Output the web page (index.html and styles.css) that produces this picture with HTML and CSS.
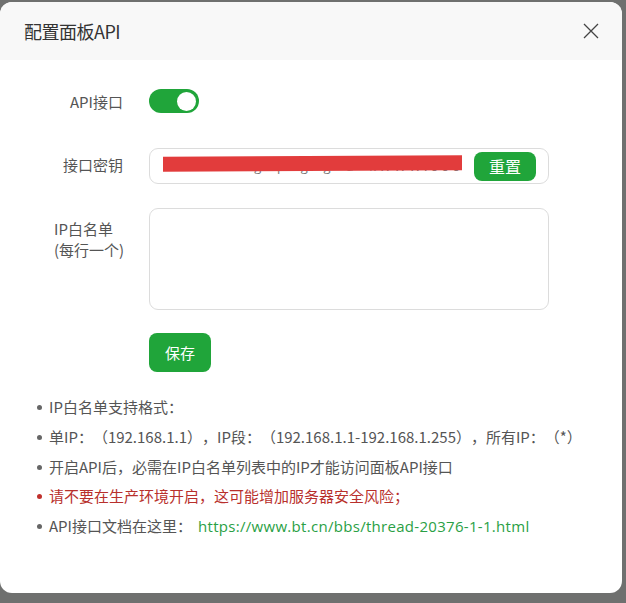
FILE: index.html
```html
<!DOCTYPE html>
<html lang="zh-CN">
<head>
<meta charset="utf-8">
<title>配置面板API</title>
<link rel="stylesheet" href="styles.css">
</head>
<body>
<div class="dialog">
  <div class="dialog-header">
    <span class="dialog-title">配置面板API</span>
    <span class="close-btn" aria-label="关闭">
      <svg width="16" height="16" viewBox="0 0 16 16"><path d="M1 1L15 15M15 1L1 15" stroke="#444" stroke-width="1.3" fill="none"/></svg>
    </span>
  </div>
  <div class="dialog-body">
    <div class="form-row row-toggle">
      <div class="form-label">API接口</div>
      <div class="form-control">
        <span class="switch"><span class="knob"></span></span>
      </div>
    </div>
    <div class="form-row row-key">
      <div class="form-label label-key">接口密钥</div>
      <div class="form-control">
        <div class="key-input">
          <span class="key-text">g  p  g  g  a  kWWW.ooo</span>
          <span class="redact"></span>
          <button class="btn btn-small">重置</button>
        </div>
      </div>
    </div>
    <div class="form-row row-ips">
      <div class="form-label label-multi">
        <div class="label-lines">IP白名单<br>(每行一个)</div>
      </div>
      <div class="form-control">
        <textarea class="ip-area"></textarea>
      </div>
    </div>
    <div class="form-row row-save">
      <div class="form-label"></div>
      <div class="form-control">
        <button class="btn btn-save">保存</button>
      </div>
    </div>
    <ul class="tips">
      <li>IP白名单支持格式：</li>
      <li>单IP：（192.168.1.1），IP段：（192.168.1.1-192.168.1.255），所有IP：（*）</li>
      <li>开启API后，必需在IP白名单列表中的IP才能访问面板API接口</li>
      <li class="danger">请不要在生产环境开启，这可能增加服务器安全风险；</li>
      <li>API接口文档在这里：<a class="link" href="#">https://www.bt.cn/bbs/thread-20376-1-1.html</a></li>
    </ul>
  </div>
</div>
</body>
</html>
```

FILE: styles.css
```css
html, body {
  margin: 0;
  padding: 0;
}
body {
  background: #6f706f;
  width: 626px;
  height: 603px;
  overflow: hidden;
  font-family: "Open Sans", "Noto Sans CJK SC", sans-serif;
  color: #555;
}
.dialog {
  margin-top: 2px;
  width: 622px;
  height: 591px;
  background: #fff;
  border-radius: 12px;
  overflow: hidden;
}
.dialog-header {
  height: 58px;
  background: #f8f8f8;
  display: flex;
  align-items: center;
  justify-content: space-between;
  padding: 0 23px 0 24px;
}
.dialog-title {
  font-family: "Noto Sans CJK SC", sans-serif;
  font-size: 18px;
  color: #333;
  letter-spacing: -0.5px;
}
.close-btn {
  display: flex;
  width: 16px;
  height: 16px;
}
.dialog-body {
  padding-top: 29px;
}
.form-row {
  display: flex;
  align-items: center;
}
.form-label {
  width: 123px;
  text-align: right;
  font-size: 15px;
  color: #555;
  font-family: "Noto Sans CJK SC", sans-serif;
  flex-shrink: 0;
}
.label-key {
  padding-bottom: 3px;
}
.form-control {
  margin-left: 26px;
}
.row-toggle {
  height: 24px;
}
.switch {
  display: flex;
  align-items: center;
  justify-content: flex-end;
  width: 50px;
  height: 24px;
  border-radius: 12px;
  background: #20a53a;
  padding-right: 3px;
  box-sizing: border-box;
}
.knob {
  width: 19px;
  height: 19px;
  border-radius: 50%;
  background: #fff;
}
.row-key {
  margin-top: 35px;
}
.key-input {
  position: relative;
  display: flex;
  align-items: center;
  justify-content: space-between;
  width: 400px;
  height: 36px;
  box-sizing: border-box;
  border: 1px solid #dcdcdc;
  border-radius: 9px;
  padding: 0 12px 0 13px;
}
.key-text {
  font-size: 13px;
  color: #777;
  width: 300px;
  text-align: right;
  letter-spacing: 3px;
  white-space: pre;
  overflow: hidden;
}
.redact {
  position: absolute;
  left: 13px;
  top: 7px;
  width: 299px;
  height: 15px;
  background: #e23c3c;
  transform: skewY(-0.3deg);
}
.btn {
  border: none;
  background: #20a53a;
  color: #fff;
  font-family: "Noto Sans CJK SC", sans-serif;
  font-size: 15px;
  cursor: pointer;
  padding: 0;
}
.btn-small {
  width: 62px;
  height: 29px;
  border-radius: 8px;
  font-size: 16px;
}
.row-ips {
  margin-top: 24px;
  align-items: flex-start;
}
.label-multi {
  display: flex;
  justify-content: flex-end;
}
.label-lines {
  text-align: left;
  line-height: 21px;
  padding-top: 10px;
  width: 69px;
  white-space: nowrap;
}
.ip-area {
  display: block;
  width: 400px;
  height: 102px;
  box-sizing: border-box;
  border: 1px solid #dcdcdc;
  border-radius: 9px;
  resize: none;
  outline: none;
  margin: 0;
}
.row-save {
  margin-top: 23px;
}
.btn-save {
  width: 62px;
  height: 39px;
  border-radius: 8px;
}
.tips {
  margin: 20px 0 0 0;
  padding: 0 0 0 49px;
  list-style: none;
  font-size: 15px;
  color: #555;
  font-family: "Noto Sans CJK SC", "Open Sans", sans-serif;
  text-spacing-trim: space-all;
}
.tips li {
  position: relative;
  height: 29.8px;
  line-height: 30px;
  white-space: nowrap;
}
.tips li::before {
  content: "";
  position: absolute;
  left: -12px;
  top: 13px;
  width: 5px;
  height: 5px;
  border-radius: 50%;
  background: #666;
}
.tips li.danger {
  color: #b8302c;
}
.tips li.danger::before {
  background: #c0302c;
}
.link {
  color: #2a9f45;
  text-decoration: none;
  font-family: "Open Sans", sans-serif;
  letter-spacing: 0.3px;
  margin-left: 6px;
}
```
